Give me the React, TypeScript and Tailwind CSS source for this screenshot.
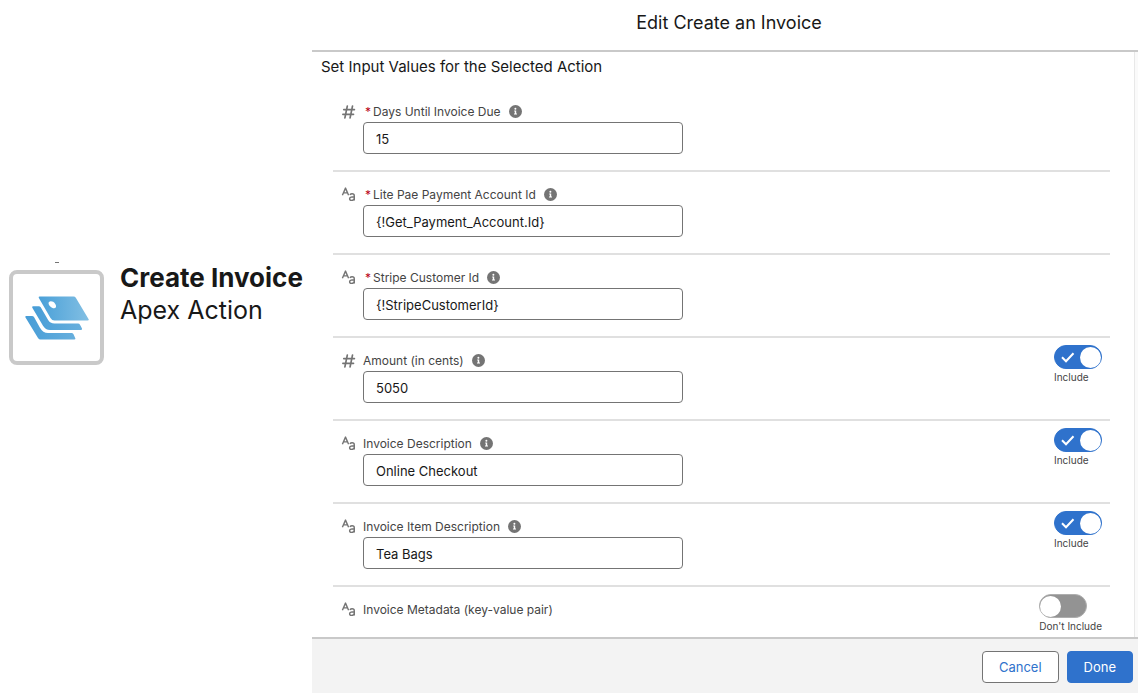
import { useState } from 'react'
import clsx from 'clsx'

type Field = {
  id: string
  label: string
  type: 'number' | 'text'
  value?: string
  required?: boolean
  include?: boolean
}

const fields: Field[] = [
  { id: 'days', label: 'Days Until Invoice Due', type: 'number', value: '15', required: true },
  { id: 'account', label: 'Lite Pae Payment Account Id', type: 'text', value: '{!Get_Payment_Account.Id}', required: true },
  { id: 'customer', label: 'Stripe Customer Id', type: 'text', value: '{!StripeCustomerId}', required: true },
  { id: 'amount', label: 'Amount (in cents)', type: 'number', value: '5050', include: true },
  { id: 'description', label: 'Invoice Description', type: 'text', value: 'Online Checkout', include: true },
  { id: 'item', label: 'Invoice Item Description', type: 'text', value: 'Tea Bags', include: true },
  { id: 'metadata', label: 'Invoice Metadata (key-value pair)', type: 'text', include: false },
]

function TypeIcon({ type }: { type: Field['type'] }) {
  if (type === 'number') {
    return (
      <svg className="h-4 w-4" viewBox="0 0 16 16" fill="none" stroke="#747474" strokeWidth="1.7" strokeLinecap="round">
        <path d="M6.3 2.2 3.900 13.800M11.500 2.200 9.100 13.800M2.800 5.600H13.400M1.900 10.300H12.500" />
      </svg>
    )
  }
  return (
    <svg className="h-4 w-4" viewBox="0 0 16 16" fill="none" stroke="#747474" strokeWidth="1.4" strokeLinejoin="round">
      <path d="M1.400 8.200 4.500 1.100 7.600 8.200M2.500 5.900H6.500" />
      <path d="M8.900 7.900C9.400 7.200 10.200 6.800 11.100 6.800c1.500 0 2.200.8 2.200 2.100v4.700M13.300 9.800c-3.100 0-4.700.5-4.700 2 0 1 .7 1.600 1.900 1.600 1.500 0 2.800-.9 2.800-2.400" />
    </svg>
  )
}

function InfoIcon() {
  return (
    <svg className="block h-[13px] w-[13px]" viewBox="0 0 13 13">
      <circle cx="6.5" cy="6.5" r="6.5" fill="#747474" />
      <circle cx="6.4" cy="3.800" r="1" fill="#fff" />
      <path d="M5.200 5.500h2v3.100h.8v1H5v-1h.8V6.500h-.6z" fill="#fff" />
    </svg>
  )
}

function Logo() {
  return (
    <svg className="h-[44px] w-[64px]" viewBox="0 0 64 44">
      <defs>
        <linearGradient id="cards" x1="0" y1="0" x2="1" y2="0">
          <stop offset="0" stopColor="#4aa0d8" />
          <stop offset="1" stopColor="#82bfe3" />
        </linearGradient>
        <linearGradient id="edge" x1="0" y1="0" x2="1" y2="0">
          <stop offset="0" stopColor="#479dd7" />
          <stop offset="1" stopColor="#67afdd" />
        </linearGradient>
      </defs>
      <path
        fill="url(#cards)"
        fillRule="evenodd"
        d="M14.500.5H48.500Q50 .5 50.800 1.800L63.500 23Q64.400 24.500 62.600 24.500H29.500Q27 24.500 25.500 22L14 2.300Q13.200.5 14.500.5ZM23.800 6.300c1.400-1.700 4.600-1 6.300 1.400 1.700 2.400 1 4.700-1 4.600-3-.1-6.500-3.900-5.300-6Z"
      />
      <path fill="url(#edge)" d="M8 10.200H13.800Q15 10.200 15.700 11.300L23 23.800Q25 27.600 29.500 27.600H53Q54.400 27.600 55 28.700L57 32.600Q57.600 34 56 34H25Q20.500 34 18 29.800L7.300 11.700Q6.600 10.200 8 10.200Z" />
      <path fill="url(#edge)" d="M1.300 20H7Q8.300 20 9 21.100L14.800 31.400Q18 37 23 37H46.500Q47.800 37 48.400 38.100L50.200 42Q50.900 43.600 49.300 43.600H15.500Q14 43.600 13 42L.5 21.500Q-.2 20 1.300 20Z" />
    </svg>
  )
}

function Toggle({ id, initial }: { id: string; initial: boolean }) {
  const [on, setOn] = useState(initial)
  return (
    <label htmlFor={id} className="mt-[7px] flex flex-col items-start text-[10px] leading-4 text-[#444444]">
      <input id={id} type="checkbox" className="peer sr-only" checked={on} onChange={e => setOn(e.target.checked)} />
      <span
        className={clsx(
          'flex h-6 w-12 items-center rounded-full border',
          on ? 'justify-between border-[#2f72cc] bg-[#2f72cc] pl-[5px]' : 'border-[#aeaeae] bg-[#939393]',
        )}
      >
        {on && (
          <svg className="h-4 w-4" viewBox="0 0 16 16" fill="none" stroke="#fff" strokeWidth="2">
            <path d="M2 8.300 6 12.200 13.500 4.200" />
          </svg>
        )}
        <span className="h-[21px] w-[21px] rounded-full bg-white" />
      </span>
      {on ? 'Include' : "Don't Include"}
    </label>
  )
}

function FieldRow({ field }: { field: Field }) {
  return (
    <li className="flex border-b-2 border-[#e0e0e0] pr-2 last:border-b-0">
      <div className="flex w-[30px] shrink-0 items-start pt-[15px] pl-2">
        <TypeIcon type={field.type} />
      </div>
      <div className={clsx('flex flex-1 flex-col pt-[13px]', field.value && 'pb-4')}>
        <div className="flex h-5 items-center gap-2">
          <label htmlFor={field.id} className="text-[12px] leading-5 text-[#444444]">
            {field.required && <abbr title="required" className="mr-[2px] ml-[2px] text-[#ba0517] no-underline">*</abbr>}
            {field.label}
          </label>
          {field.value && (
            <button type="button" aria-label={`Help for ${field.label}`} className="pb-px">
              <InfoIcon />
            </button>
          )}
        </div>
        {field.value && (
          <input
            id={field.id}
            type="text"
            defaultValue={field.value}
            className="h-8 w-full max-w-[320px] rounded-[4px] border border-[#747474] bg-white px-3 pt-px text-[13px] text-[#181818]"
          />
        )}
      </div>
      {field.include !== undefined && (
        <Toggle id={field.value ? `${field.id}-include` : field.id} initial={field.include} />
      )}
    </li>
  )
}

export default function App() {
  return (
    <div className="flex min-h-screen bg-white font-['Inter',sans-serif] text-[#181818]">
      <aside className="flex w-[312px] shrink-0 flex-col justify-center pb-[66px] pl-[9px]">
        <div className="flex h-2 w-[95px] items-start justify-center">
          <span className="h-px w-1 bg-[#747474]" />
        </div>
        <div className="flex gap-4">
          <div className="flex h-[95px] w-[95px] shrink-0 items-center justify-center rounded-lg border-4 border-[#c9c9c9]">
            <Logo />
          </div>
          <div className="-mt-2 leading-8 whitespace-nowrap">
            <h1 className="text-[26px] leading-8 font-bold">Create Invoice</h1>
            <p className="text-[25px] leading-8">Apex Action</p>
          </div>
        </div>
      </aside>
      <main className="flex flex-1 flex-col">
        <header className="flex h-[52px] items-center justify-center border-b-2 border-[#c9c9c9] pb-1 pl-2">
          <h2 className="text-[18px] leading-6">Edit Create an Invoice</h2>
        </header>
        <form className="flex flex-1 flex-col" onSubmit={e => e.preventDefault()}>
          <div className="flex flex-1">
            <div className="flex-1 pr-6 pl-[9px]">
              <h3 className="mb-[7px] text-[15px] leading-[30px]">Set Input Values for the Selected Action</h3>
              <ul className="ml-3">
                {fields.map(f => (
                  <FieldRow field={f} key={f.id} />
                ))}
              </ul>
            </div>
            <div className="w-1 border-l border-[#e8e8e8] bg-[#fafafa]" />
          </div>
          <footer className="flex justify-end gap-2 border-t-2 border-[#c9c9c9] bg-[#f3f3f3] pt-3 pr-[5px] pb-[10px] text-[13px]">
            <button type="button" className="h-8 rounded-[4px] border border-[#747474] bg-white px-4 pt-px text-[#2f72cc]">
              Cancel
            </button>
            <button type="submit" className="h-8 rounded-[4px] border border-[#2f72cc] bg-[#2f72cc] px-4 pt-px text-white">
              Done
            </button>
          </footer>
        </form>
      </main>
    </div>
  )
}
